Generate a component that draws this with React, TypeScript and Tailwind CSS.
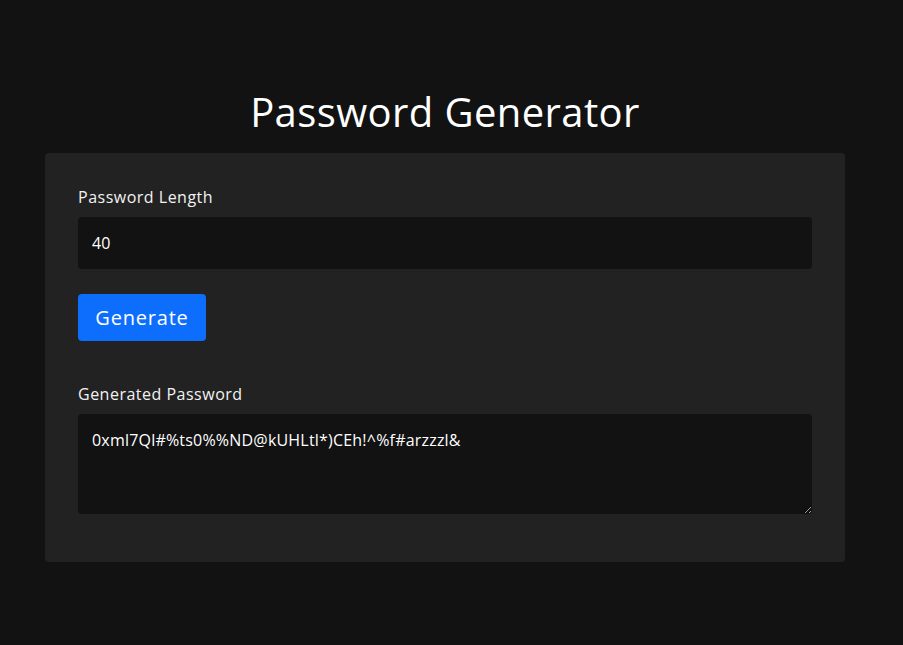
import React, { useState } from "react";

const font = { fontFamily: '"Open Sans", "Liberation Sans", sans-serif' };

export default function App() {
  const [length, setLength] = useState("40");
  const [password] = useState("0xml7Ql#%ts0%%ND@kUHLtl*)CEh!^%f#arzzzl&");

  return (
    <div className="min-h-[645px] w-full bg-[#121212] text-white font-['Open_Sans','Liberation_Sans',sans-serif]">
      <div className="w-[800px] ml-[45px] pt-[86px]">
        <h1 className="text-center text-[40px] leading-[52px] font-normal text-white mb-[15px] tracking-[0.4px]">
          Password Generator
        </h1>

        <div className="bg-[#222222] rounded-[4px] px-[33px] pt-[32px] pb-[48px]">
          <label className="block text-[16px] leading-6 text-[#f2f2f2] mb-2 tracking-[0.5px]">Password Length</label>
          <input
            type="text"
            value={length}
            onChange={(e) => setLength(e.target.value)}
            style={font}
            className="block w-full h-[52px] rounded-[4px] bg-[#121212] px-[14px] text-[16px] text-white outline-none"
          />

          <button
            style={font}
            className="mt-[25px] h-[47px] w-[128px] rounded-[4px] bg-[#0d6efd] text-[20px] tracking-[0.8px] text-white"
          >
            Generate
          </button>

          <label className="block mt-[41px] text-[16px] leading-6 text-[#f2f2f2] mb-2 tracking-[0.5px]">Generated Password</label>
          <textarea
            readOnly
            value={password}
            style={font}
            className="block w-full h-[100px] rounded-[4px] bg-[#121212] px-[14px] py-[14px] text-[16px] leading-6 tracking-[0.2px] text-white outline-none resize-y"
          />
        </div>
      </div>
    </div>
  );
}
